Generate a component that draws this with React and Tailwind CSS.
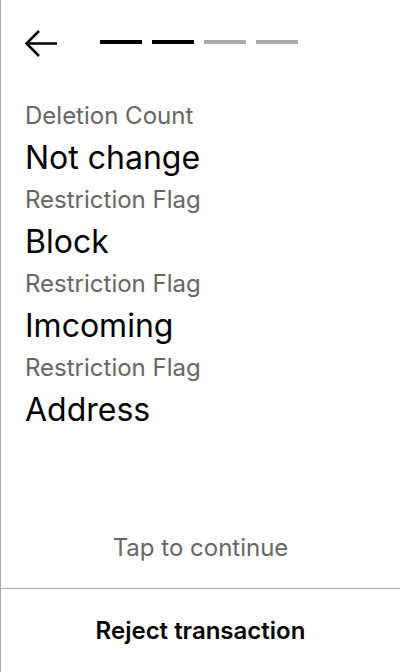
export default function App() {
  const steps = [true, true, false, false];
  const rows = [
    { label: "Deletion Count", value: "Not change" },
    { label: "Restriction Flag", value: "Block" },
    { label: "Restriction Flag", value: "Imcoming" },
    { label: "Restriction Flag", value: "Address" },
  ];

  return (
    <div
      className="flex flex-col h-[672px] w-[400px] bg-white border-l border-[#aaaaaa]"
      style={{ fontFamily: "Inter, 'Noto Sans', sans-serif" }}
    >
      {/* header */}
      <div className="flex items-start pl-[23px] pt-[30px] h-[58px]">
        <svg width="33" height="27" viewBox="0 0 33 27" fill="none">
          <path
            d="M15 1 L2.5 13.5 L15 26 M2.5 13.5 H33"
            stroke="black"
            strokeWidth="2.5"
          />
        </svg>
        <div className="flex gap-[10px] ml-[43px] mt-[10px]">
          {steps.map((done, i) => (
            <div
              key={i}
              className={`w-[42px] h-[4px] ${done ? "bg-black" : "bg-[#aaaaaa]"}`}
            />
          ))}
        </div>
      </div>

      {/* details */}
      <div className="flex-1 px-6 pt-[38px]">
        {rows.map((r, i) => (
          <div key={i}>
            <p className="text-[24px] leading-[40px] text-[#666666]">{r.label}</p>
            <p className="text-[32px] leading-[44px] text-black">{r.value}</p>
          </div>
        ))}
      </div>

      <p className="text-center text-[24px] leading-[28px] text-[#666666] mb-[26px]">
        Tap to continue
      </p>

      <div className="border-t border-[#aaaaaa] h-[84px] flex items-center justify-center">
        <span className="text-[24px] font-semibold text-black">Reject transaction</span>
      </div>
    </div>
  );
}
